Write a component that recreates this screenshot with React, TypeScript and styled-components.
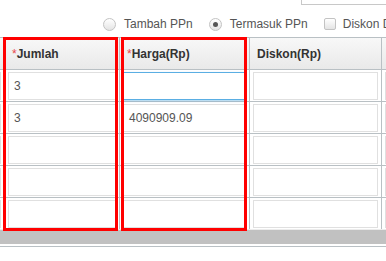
import React from "react";
import styled, { createGlobalStyle } from "styled-components";

const GlobalStyle = createGlobalStyle`
    html, body {
        margin: 0;
        padding: 0;
        background: #ffffff;
    }
    body {
        font-family: "Liberation Sans", Arial, sans-serif;
    }
`

const Page = styled.div`
    position: relative;
    width: 386px;
    height: 261px;
    overflow: hidden;
    background: #ffffff;
`

const TopStrip = styled.div`
    height: 5px;
    display: flex;
    align-items: flex-end;
    overflow: hidden;
`

const TopInput = styled.div`
    margin-left: 301px;
    width: 120px;
    height: 24px;
    flex-shrink: 0;
    box-sizing: border-box;
    border: 1px solid #c8c8c8;
    background: #fff;
`

const OptionRow = styled.div`
    height: 32px;
    box-sizing: border-box;
    padding: 6px 0 0 103px;
    display: flex;
    align-items: center;
    white-space: nowrap;
    overflow: hidden;
`

const Option = styled.label`
    display: flex;
    align-items: center;
    margin-right: 16px;
    font-size: 12px;
    color: #555;
    flex-shrink: 0;
`

const Radio = styled.span<{ checked?: boolean }>`
    width: 13px;
    height: 13px;
    box-sizing: border-box;
    border-radius: 50%;
    border: 1px solid #c3c3c3;
    background: linear-gradient(#ffffff, #e4e4e4);
    margin-right: 8px;
    display: flex;
    align-items: center;
    justify-content: center;
    &::after {
        content: "";
        width: 5px;
        height: 5px;
        border-radius: 50%;
        background: ${(props) => (props.checked ? "#555" : "transparent")};
    }
`

const Checkbox = styled.span`
    width: 12px;
    height: 12px;
    box-sizing: border-box;
    border-radius: 2px;
    border: 1px solid #c3c3c3;
    background: linear-gradient(#ffffff, #e4e4e4);
    margin-right: 7px;
`

const TableWrap = styled.div`
    width: 386px;
    overflow: hidden;
`

const Grid = styled.div`
    display: grid;
    grid-template-columns: 105px 115px 130px 132px 120px;
    margin-left: -100px;
    width: 602px;
    border-top: 1px solid #b9c0c4;
`

const HeadCell = styled.div`
    height: 32px;
    box-sizing: border-box;
    padding-left: 7px;
    display: flex;
    align-items: center;
    border-right: 1px solid #b9c0c4;
    border-bottom: 1px solid #b9c0c4;
    background: linear-gradient(#f8f8f8, #e9e9e9);
    font-size: 12px;
    font-weight: bold;
    color: #333;
    white-space: nowrap;
`

const Required = styled.span`
    color: #e8474b;
    font-weight: normal;
    align-self: flex-start;
    margin-top: 10px;
    font-size: 12px;
    line-height: 12px;
`

const BodyCell = styled.div<{ last?: boolean }>`
    height: ${(props) => (props.last ? "31px" : "32px")};
    box-sizing: border-box;
    padding: 2px 3px 1px 3px;
    border-right: 1px solid #b9c0c4;
    border-bottom: ${(props) => (props.last ? "none" : "1px solid #b9c0c4")};
`

const Field = styled.div<{ focused?: boolean }>`
    height: 28px;
    box-sizing: border-box;
    border: 1px solid ${(props) => (props.focused ? "#5aaee3" : "#e0e0e0")};
    box-shadow: ${(props) => (props.focused ? "0 1px 2px rgba(90,174,227,0.6)" : "none")};
    background: #fff;
    padding-left: 5px;
    display: flex;
    align-items: center;
    font-size: 12px;
    color: #555;
`

const ScrollBar = styled.div`
    height: 15px;
    box-sizing: border-box;
    border-top: 1px solid #ececec;
    background: #c1c1c1;
`

const BottomLine = styled.div`
    margin-top: 2px;
    height: 1px;
    background: #b9c0c4;
`

const Highlight = styled.div<{ left: number; width: number }>`
    position: absolute;
    top: 37px;
    left: ${(props) => props.left}px;
    width: ${(props) => props.width}px;
    height: 194px;
    box-sizing: border-box;
    border: 3px solid #ff0000;
    pointer-events: none;
`

type Row = string[];

const rows: Row[] = [
    ["", "3", "", "", ""],
    ["", "3", "4090909.09", "", ""],
    ["", "", "", "", ""],
    ["", "", "", "", ""],
    ["", "", "", "", ""],
];

const App: React.FC = () => {
    return (
        <Page>
            <GlobalStyle />
            <TopStrip>
                <TopInput />
            </TopStrip>
            <OptionRow>
                <Option><Radio />Tambah PPn</Option>
                <Option><Radio checked />Termasuk PPn</Option>
                <Option><Checkbox />Diskon D</Option>
            </OptionRow>
            <TableWrap>
                <Grid>
                    <HeadCell />
                    <HeadCell><Required>*</Required>Jumlah</HeadCell>
                    <HeadCell><Required>*</Required>Harga(Rp)</HeadCell>
                    <HeadCell>Diskon(Rp)</HeadCell>
                    <HeadCell />
                    {rows.map((row, r) =>
                        row.map((value, c) => (
                            <BodyCell key={`${r}-${c}`} last={r === rows.length - 1}>
                                <Field focused={r === 0 && c === 2}>{value}</Field>
                            </BodyCell>
                        ))
                    )}
                </Grid>
            </TableWrap>
            <ScrollBar />
            <BottomLine />
            <Highlight left={3} width={115} />
            <Highlight left={121} width={126} />
        </Page>
    );
};

export default App;
